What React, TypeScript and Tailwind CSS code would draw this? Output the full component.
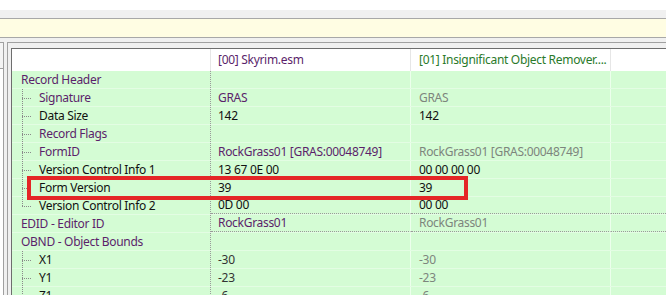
import type { ReactNode } from "react";

type Tone = "purple" | "black" | "gray" | "dark";

type Row = {
  label: string;
  level: 0 | 1;
  labelTone: Tone;
  last?: boolean;
  dotted?: boolean;
  v1?: string;
  t1?: Tone;
  v2?: string;
  t2?: Tone;
};

const toneClass: Record<Tone, string> = {
  purple: "text-[#5b1f6b]",
  black: "text-[#111111]",
  gray: "text-[#7d857d]",
  dark: "text-[#333333]",
};

const rows: Row[] = [
  { label: "Record Header", level: 0, labelTone: "purple" },
  { label: "Signature", level: 1, labelTone: "purple", v1: "GRAS", t1: "purple", v2: "GRAS", t2: "gray" },
  { label: "Data Size", level: 1, labelTone: "black", v1: "142", t1: "black", v2: "142", t2: "black" },
  { label: "Record Flags", level: 1, labelTone: "purple" },
  {
    label: "FormID",
    level: 1,
    labelTone: "purple",
    v1: "RockGrass01 [GRAS:00048749]",
    t1: "purple",
    v2: "RockGrass01 [GRAS:00048749]",
    t2: "gray",
  },
  { label: "Version Control Info 1", level: 1, labelTone: "black", v1: "13 67 0E 00", t1: "black", v2: "00 00 00 00", t2: "black" },
  { label: "Form Version", level: 1, labelTone: "black", v1: "39", t1: "black", v2: "39", t2: "black" },
  { label: "Version Control Info 2", level: 1, labelTone: "black", last: true, dotted: true, v1: "0D 00", t1: "black", v2: "00 00", t2: "black" },
  { label: "EDID - Editor ID", level: 0, labelTone: "purple", dotted: true, v1: "RockGrass01", t1: "purple", v2: "RockGrass01", t2: "gray" },
  { label: "OBND - Object Bounds", level: 0, labelTone: "purple" },
  { label: "X1", level: 1, labelTone: "black", v1: "-30", t1: "dark", v2: "-30", t2: "gray" },
  { label: "Y1", level: 1, labelTone: "black", v1: "-23", t1: "dark", v2: "-23", t2: "gray" },
  { label: "Z1", level: 1, labelTone: "black", v1: "-6", t1: "dark", v2: "-6", t2: "gray" },
];

function TreeBranch({ last }: { last?: boolean }) {
  return (
    <div className="relative h-full w-[17px] shrink-0">
      <div
        className={`absolute left-0 top-0 border-l border-dotted border-[#8a8a8a] ${last ? "h-1/2" : "h-full"}`}
      />
      <div className="absolute left-0 top-1/2 w-[9px] border-t border-dotted border-[#8a8a8a]" />
    </div>
  );
}

function Cell({ children, className }: { children?: ReactNode; className?: string }) {
  return (
    <div className={`flex h-full items-center overflow-hidden whitespace-nowrap ${className ?? ""}`}>
      {children}
    </div>
  );
}

const dottedBottom = "border-b border-b-[#9a9a9a] [border-bottom-style:dotted]";

export default function App() {
  return (
    <div
      className="relative h-[295px] w-[666px] overflow-hidden bg-[#f0f0f0] text-[12px] leading-[18px] tracking-[-0.3px]"
      style={{ fontFamily: '"Noto Sans", "Segoe UI", sans-serif' }}
    >
      <div className="h-[10px] bg-white" />
      <div className="h-[8px] bg-[#f0f0f0]" />
      <div className="h-[20px] border-y border-[#a8a8a8] bg-[#fffde3]" />
      <div className="h-[4px]" />

      <div className="flex h-full">
        {/* left pane stub */}
        <div className="flex w-[4px] flex-col">
          <div className="h-[26px] border-r border-t border-[#a0a0a0] bg-[#f4f4f4]" />
          <div className="flex-1 border-r border-t border-[#a0a0a0] bg-white" />
        </div>

        {/* record view */}
        <div className="ml-[3px] flex-1 border-l border-t border-[#a0a0a0] pl-[3px] pt-[5px]">
          <div className="h-full border-l border-t border-[#6e6e6e] bg-[#d4fcd4]">
            <div className="grid h-[22px] grid-cols-[199px_200px_200px_1fr] bg-white">
              <Cell className="border-r border-[#e6e6e6]" />
              <Cell className="border-r border-[#e6e6e6] pl-[7px] text-[#5b1f6b]">[00] Skyrim.esm</Cell>
              <Cell className="border-r border-[#e6e6e6] pl-[8px] text-[#2a7a2a]">
                [01] Insignificant Object Remover....
              </Cell>
              <Cell />
            </div>

            {rows.map((r) => (
              <div
                key={r.label}
                className="grid h-[18px] grid-cols-[199px_200px_200px_1fr] border-b border-[#e3fde3]"
              >
                <Cell className={`border-r border-dotted border-[#9a9a9a] ${r.level === 0 ? "pl-[9px]" : "pl-[10px]"}`}>
                  {r.level === 1 && <TreeBranch last={r.last} />}
                  <span className={toneClass[r.labelTone]}>{r.label}</span>
                </Cell>
                <Cell
                  className={`border-r border-[#ecffec] pl-[7px] ${r.dotted ? dottedBottom : ""} ${r.t1 ? toneClass[r.t1] : ""}`}
                >
                  {r.v1}
                </Cell>
                <Cell
                  className={`border-r border-[#ecffec] pl-[8px] ${r.dotted ? dottedBottom : ""} ${r.t2 ? toneClass[r.t2] : ""}`}
                >
                  {r.v2}
                </Cell>
                <Cell className={r.dotted ? dottedBottom : ""} />
              </div>
            ))}
          </div>
        </div>
      </div>

      {/* highlight annotation */}
      <div className="absolute left-[27px] top-[176px] h-[24px] w-[441px] border-4 border-[#e42626]" />
    </div>
  );
}
